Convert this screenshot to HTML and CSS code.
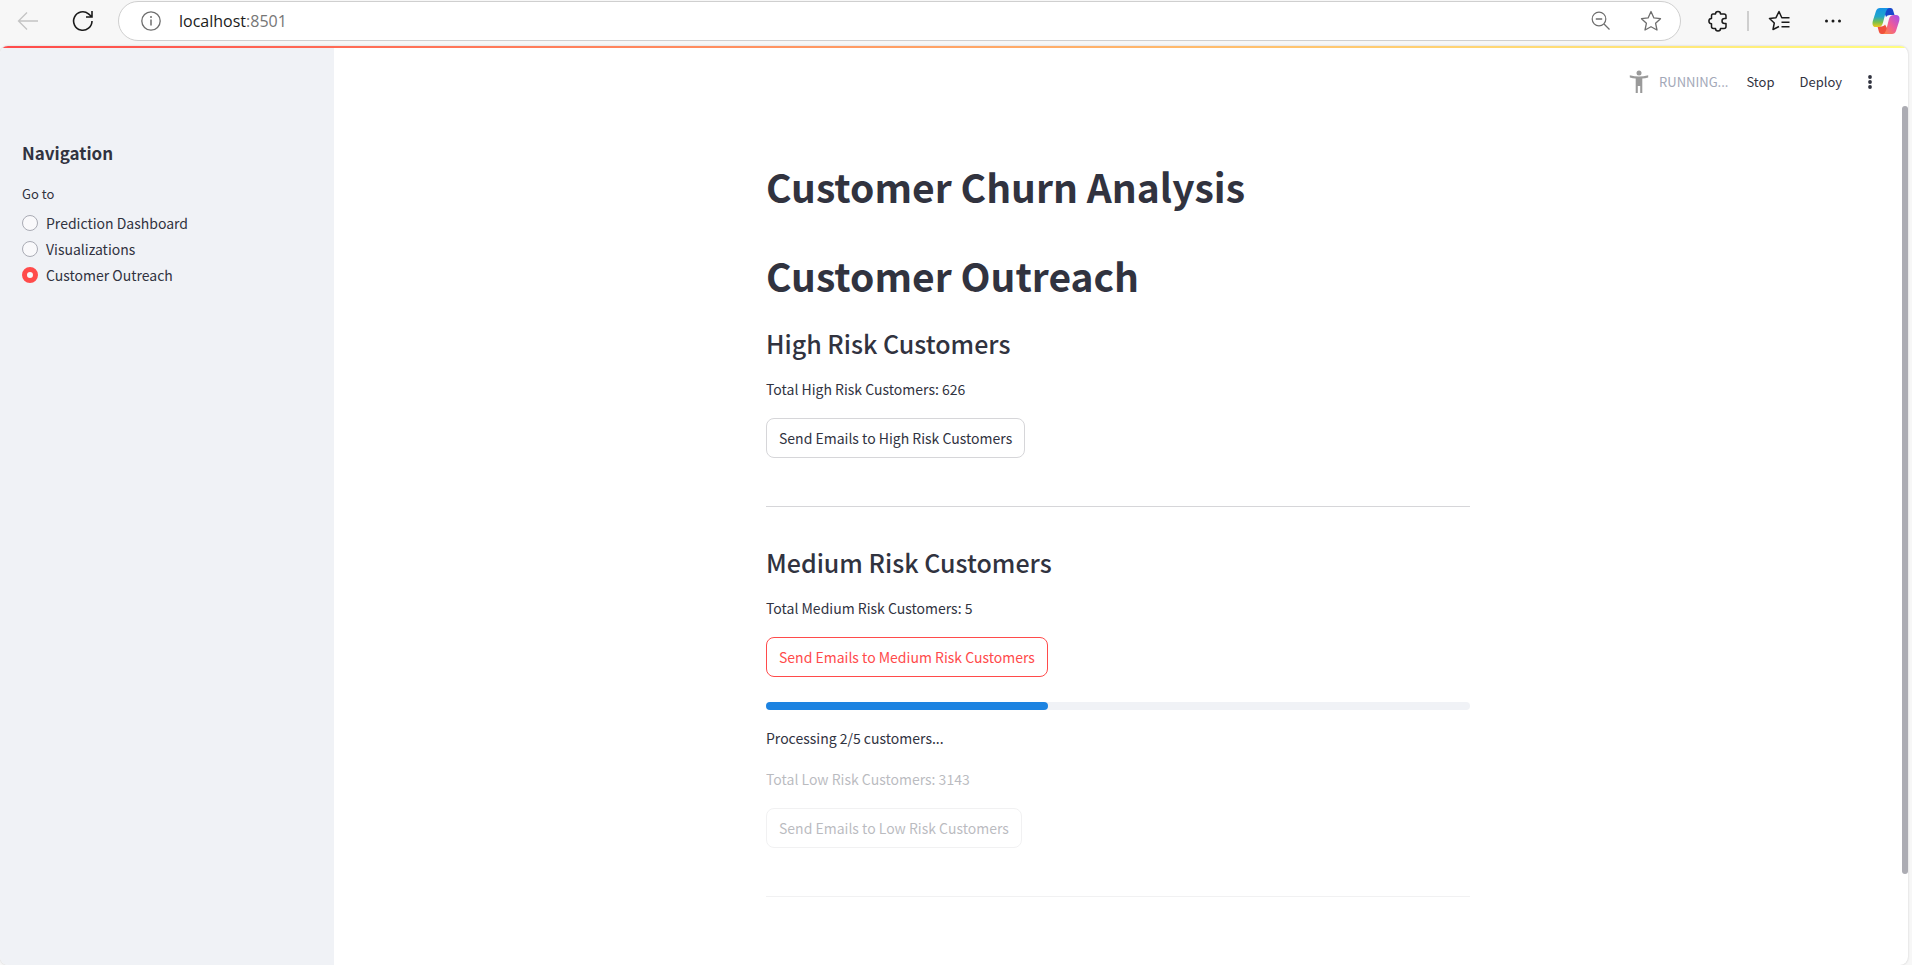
FILE: index.html
```html
<!DOCTYPE html>
<html lang="en">
<head>
<meta charset="utf-8">
<title>Customer Churn Analysis</title>
<link rel="stylesheet" href="styles.css">
</head>
<body>
<header class="browser">
  <button class="icon-btn back" aria-label="Back" disabled>
    <svg width="22" height="20" viewBox="0 0 22 20"><path d="M21 10H1.500M10 1.500L1.500 10L10 18.500" fill="none" stroke="#c4c4c4" stroke-width="1.300"/></svg>
  </button>
  <button class="icon-btn reload" aria-label="Reload">
    <svg width="22" height="22" viewBox="0 0 22 22"><path d="M20 11A9.200 9.200 0 1 1 16.500 3.800L19.500 6.500M20 1V7H14" fill="none" stroke="#1b1b1b" stroke-width="1.600"/></svg>
  </button>
  <div class="address">
    <svg width="20" height="20" viewBox="0 0 20 20"><circle cx="10" cy="10" r="9.200" fill="none" stroke="#6e6e6e" stroke-width="1.300"/><path d="M10 8.500V14.500" stroke="#6e6e6e" stroke-width="1.500"/><circle cx="10" cy="5.900" r="1" fill="#6e6e6e"/></svg>
    <span class="url">localhost<span class="port">:8501</span></span>
    <button class="icon-btn zoom" aria-label="Zoom out">
      <svg width="20" height="20" viewBox="0 0 20 20"><circle cx="8" cy="8" r="6.800" fill="none" stroke="#6e6e6e" stroke-width="1.200"/><path d="M4.800 8H11.200M13 13L18.500 18.500" stroke="#6e6e6e" stroke-width="1.300"/></svg>
    </button>
    <button class="icon-btn" aria-label="Add to favorites">
      <svg width="22" height="22" viewBox="0 0 22 22"><path d="M11 1.500L13.900 7.900L20.500 8.700L15.600 13.300L17 20L11 16.700L5 20L6.400 13.300L1.500 8.700L8.100 7.900Z" fill="none" stroke="#6e6e6e" stroke-width="1.300" stroke-linejoin="round"/></svg>
    </button>
  </div>
  <div class="tools">
    <button class="icon-btn" aria-label="Extensions">
      <svg width="20" height="22" viewBox="0 0 20 22"><path d="M5 4H7.500A2.500 2.500 0 0 1 12.500 4H16Q18 4 18 6V8.500H16.500A2.500 2.500 0 0 0 16.500 13.500H18V16.500Q18 18.500 16 18.500H12.500A2.500 2.500 0 0 1 7.500 18.500H5.500Q3.500 18.500 3.500 16.500V13.700A2.600 2.600 0 0 1 3.500 8.500V6Q3.500 4 5 4Z" fill="none" stroke="#1b1b1b" stroke-width="1.500" stroke-linejoin="round"/></svg>
    </button>
    <span class="divider"></span>
    <button class="icon-btn favorites" aria-label="Favorites">
      <svg width="22" height="22" viewBox="0 0 22 22"><path d="M11 16.500L5 19.500L6.300 13L1.500 8.500L8 7.700L11 1.500L13.800 7.700H21.500M13.500 12.300H21.500M13.500 16.800H21.500" fill="none" stroke="#1b1b1b" stroke-width="1.500" stroke-linejoin="round"/></svg>
    </button>
    <button class="icon-btn more" aria-label="Settings and more">
      <svg width="20" height="20" viewBox="0 0 20 20" fill="#1b1b1b"><circle cx="3.500" cy="10" r="1.500"/><circle cx="10" cy="10" r="1.500"/><circle cx="16.500" cy="10" r="1.500"/></svg>
    </button>
    <button class="icon-btn" aria-label="Copilot">
      <svg width="28" height="28" viewBox="0 0 28 28">
        <defs>
          <linearGradient id="cool" x1="0" y1="0" x2="0" y2="1"><stop offset="0" stop-color="#1593e6"/><stop offset=".45" stop-color="#22a6c8"/><stop offset=".75" stop-color="#7cc04a"/><stop offset="1" stop-color="#f2c71c"/></linearGradient>
          <linearGradient id="warm" x1="1" y1="0" x2="0" y2="1"><stop offset="0" stop-color="#a14ef0"/><stop offset=".5" stop-color="#ee5a9a"/><stop offset="1" stop-color="#ff8a3c"/></linearGradient>
        </defs>
        <path d="M14 1H18.500Q20.500 1 21 3L22.500 8H18Q15 8 14 10L12.500 6Z" fill="#1748cc"/>
        <path d="M14 27H9.500Q7.500 27 7 25L5.500 19.500H8Q12 19.500 13 17.500L15.500 22Z" fill="#f0503c"/>
        <path d="M8 1H17Q14.800 1.500 13.800 5L11 15.500Q10 20 6 20H4Q-.5 20 .8 14L4 4Q5 1 8 1Z" fill="url(#cool)"/>
        <path d="M20 27H11Q13.200 26.500 14.200 23L17 12Q18 8 22 8H24Q28.500 8 27.200 14L24 24Q23 27 20 27Z" fill="url(#warm)"/>
      </svg>
    </button>
  </div>
</header>
<div class="viewport">
  <div class="rainbow"></div>
  <aside class="sidebar">
    <h2 class="nav-title">Navigation</h2>
    <fieldset class="nav">
      <legend class="nav-legend">Go to</legend>
      <label class="option"><input type="radio" name="page">Prediction Dashboard</label>
      <label class="option"><input type="radio" name="page">Visualizations</label>
      <label class="option"><input type="radio" name="page" checked>Customer Outreach</label>
    </fieldset>
  </aside>
  <main class="main">
    <div class="status">
      <svg class="runner" width="20" height="24" viewBox="0 0 20 24" fill="#9a9a9a"><circle cx="10" cy="3" r="2.500"/><path d="M.8 5.300Q10 7.700 19.200 5.300V7.500Q16 8.400 13.300 8.600V23H11.200V16H8.800V23H6.700V8.600Q4 8.400 .8 7.500Z"/></svg>
      <span class="running">RUNNING...</span>
      <button class="text-btn">Stop</button>
      <button class="text-btn">Deploy</button>
      <button class="icon-btn" aria-label="Main menu">
        <svg width="6" height="16" viewBox="0 0 6 16" fill="#31333f"><circle cx="3" cy="3" r="1.900"/><circle cx="3" cy="8" r="1.900"/><circle cx="3" cy="13" r="1.900"/></svg>
      </button>
    </div>
    <div class="content">
      <h1 class="title">Customer Churn Analysis</h1>
      <h1 class="title">Customer Outreach</h1>
      <section class="group">
        <h2 class="heading">High Risk Customers</h2>
        <p class="text">Total High Risk Customers: 626</p>
        <button class="btn">Send Emails to High Risk Customers</button>
      </section>
      <hr class="rule">
      <section class="group">
        <h2 class="heading">Medium Risk Customers</h2>
        <p class="text">Total Medium Risk Customers: 5</p>
        <button class="btn active">Send Emails to Medium Risk Customers</button>
        <div class="progress" role="progressbar" aria-valuenow="40" aria-valuemin="0" aria-valuemax="100" aria-label="Processing"><div class="bar" style="width: 40%"></div></div>
        <p class="text">Processing 2/5 customers...</p>
      </section>
      <section class="group stale">
        <p class="text">Total Low Risk Customers: 3143</p>
        <button class="btn">Send Emails to Low Risk Customers</button>
        <hr class="rule">
      </section>
    </div>
  </main>
  <div class="scroll-thumb"></div>
</div>
</body>
</html>
```
FILE: styles.css
```css
* { box-sizing: border-box; }

body {
  margin: 0;
  min-height: 100vh;
  display: flex;
  flex-direction: column;
  background: #f7f7f7;
  color: #31333f;
  font-family: "Noto Sans CJK SC", sans-serif;
  font-size: 14px;
  line-height: 24px;
}

button {
  font: inherit;
  color: inherit;
  cursor: pointer;
}

.browser {
  display: flex;
  align-items: center;
  height: 46px;
  padding: 0 12px 5px 17px;
}

.icon-btn {
  display: flex;
  padding: 0;
  border: 0;
  background: none;
}

.reload { margin-left: 33px; }

.address {
  flex: 1;
  display: flex;
  align-items: center;
  height: 40px;
  margin-left: 24px;
  padding: 0 18px 0 22px;
  border: 1px solid #cfcfcf;
  border-radius: 20px;
  background: #fff;
}

.url {
  flex: 1;
  margin-left: 18px;
  color: #1b1b1b;
  font-family: "Open Sans", sans-serif;
  font-size: 16px;
}

.port { color: #767676; }

.zoom { margin-right: 29px; }

.tools {
  display: flex;
  align-items: center;
  gap: 19px;
  margin-left: 27px;
}

.divider {
  width: 2px;
  height: 20px;
  background: #cfcfcf;
}

.favorites { margin-right: 14px; }

.more { margin-right: 10px; }

.viewport {
  position: relative;
  flex: 1;
  display: flex;
  margin-right: 4px;
  overflow: hidden;
  border-radius: 8px;
  background: #fff;
  box-shadow: 0 0 2px #c4c4c4;
}

.rainbow {
  position: absolute;
  top: 0;
  left: 0;
  right: 0;
  height: 2px;
  background: linear-gradient(90deg, #ff4b4b, #fffd80);
}

.sidebar {
  width: 334px;
  padding: 91px 22px;
  background: #f0f2f6;
}

.nav-title {
  margin: 0;
  font-size: 17px;
  font-weight: 600;
  line-height: 32px;
}

.nav {
  margin: 13px 0 0;
  padding: 0;
  border: 0;
}

.nav-legend {
  padding: 0;
  font-size: 13px;
  line-height: 24px;
  margin-bottom: 5px;
}

.option {
  display: flex;
  align-items: center;
  gap: 8px;
  margin-bottom: 2px;
}

.option input {
  appearance: none;
  width: 16px;
  height: 16px;
  margin: 0;
  border: 1px solid #a9abb4;
  border-radius: 50%;
  background: #f9f9fb;
}

.option input:checked { border: 5px solid #ff4b4b; }

.main {
  flex: 1;
  padding-right: 6px;
}

.status {
  display: flex;
  justify-content: flex-end;
  align-items: center;
  height: 72px;
  padding-right: 29px;
  font-size: 13px;
}

.running {
  margin: 0 18px 0 10px;
  color: #a3a8b8;
}

.text-btn {
  margin-right: 25px;
  padding: 0;
  border: 0;
  background: none;
}

.content {
  max-width: 704px;
  margin: 0 auto;
  padding-top: 26px;
}

.title {
  margin: 0 0 20px;
  padding-top: 16px;
  font-size: 39px;
  font-weight: 700;
  line-height: 53px;
}

.title + .group { margin-top: 24px; }

.group {
  display: flex;
  flex-direction: column;
  align-items: flex-start;
}

.heading {
  margin: 0 0 17px;
  font-size: 25px;
  font-weight: 500;
  line-height: 34px;
}

.text { margin: 0 0 17px; }

.btn {
  height: 40px;
  padding: 0 12px;
  border: 1px solid #d6d6d9;
  border-radius: 8px;
  background: #fff;
}

.btn.active {
  border-color: #ff4b4b;
  color: #ff4b4b;
}

.rule {
  width: 100%;
  margin: 48px 0 38px;
  border: 0;
  border-top: 1px solid #d6d6d9;
}

.progress {
  width: 100%;
  height: 8px;
  margin: 25px 0 16px;
  border-radius: 4px;
  background: #f0f2f6;
}

.bar {
  height: 100%;
  border-radius: 4px;
  background: #1c83e1;
}

.stale { opacity: .33; }

.scroll-thumb {
  position: absolute;
  top: 60px;
  right: 0;
  width: 6px;
  height: 768px;
  border-radius: 3px;
  background: #acacb3;
}
```
